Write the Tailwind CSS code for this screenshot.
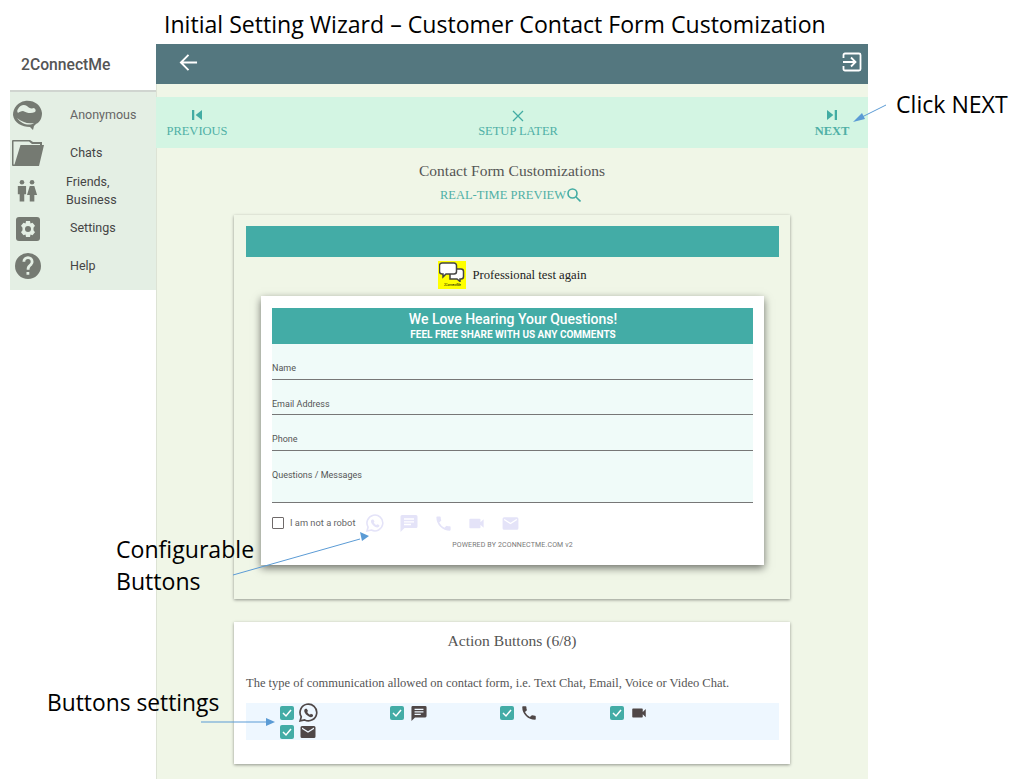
<!DOCTYPE html>
<html>
<head>
<meta charset="utf-8">
<script src="https://cdn.jsdelivr.net/npm/@tailwindcss/browser@4"></script>
</head>
<body class="bg-white">
<div class="relative w-[1015px] h-[779px] overflow-hidden bg-white font-['Liberation_Serif',serif]">
  <div class="h-[44px] pl-[164px] pt-[8px] text-[23.100px] leading-[32px] text-black font-['Open_Sans',sans-serif] whitespace-nowrap">Initial Setting Wizard – Customer Contact Form Customization</div>
  <div class="flex h-[735px]">
    <aside class="w-[156px] shrink-0 font-['Roboto',sans-serif]">
      <div class="h-[46px] pl-[21px] pt-[11px] text-[15.700px] leading-[20px] font-medium text-[#555]">2ConnectMe</div>
      <div class="ml-[10px] h-[200px] pt-[4px] bg-[#e4efe4] border-t-2 border-[#d0d5d0] relative text-[12.500px] text-[#444]">
        <div class="flex items-center h-[39px]">
          <svg class="w-[32px] h-[32px] ml-[2px] shrink-0" viewBox="0 0 32 32"><path fill="#757a72" d="M13 1c9-1 16 4 17 12 0 5-2 9-6 11l-2 2-1 4-3-3C10 27 2 23 1 15 1 8 6 2 13 1z"/><path fill="#e4efe4" d="M6 9c2-4 6-5 9-3 2 2 4 3 7 2 2 1 2 3 1 4-4 2-8 1-12-1-2 0-4 1-5 2-1-1-1-3 0-4zM5 18c5 4 10 6 17 5-4 3-12 2-17-5z"/></svg>
          <span class="ml-[26px] text-[#666]">Anonymous</span>
        </div>
        <div class="flex items-center h-[36px]">
          <svg class="w-[32px] h-[26px] ml-[2px] shrink-0" viewBox="0 0 32 26"><path fill="#757a72" d="M1 0h17l3 2h9v3h2l-5 21H1a1 1 0 0 1-1-1V1a1 1 0 0 1 1-1z"/><path fill="#e4efe4" d="M1.500 1.500h15.500l3 2.500H28v1H8.500L2.500 24.500h-1z"/></svg>
          <span class="ml-[26px]">Chats</span>
        </div>
        <div class="flex items-center h-[39px]">
          <svg class="w-[22px] h-[25px] ml-[6px] shrink-0" viewBox="0 0 24 26"><g fill="#757a72"><circle cx="6.500" cy="4" r="2.500"/><circle cx="17.500" cy="4" r="2.500"/><path d="M2 8h9v9H9v8H4v-8H2z"/><path d="M15 8h5l3 10h-3v7h-5v-7h-3z"/></g></svg>
          <span class="ml-[28px] leading-[18px]">Friends,<br>Business</span>
        </div>
        <div class="flex items-center h-[37px]">
          <svg class="w-[24px] h-[24px] ml-[6px] shrink-0" viewBox="0 0 24 24"><rect width="24" height="24" rx="3" fill="#757a72"/><path fill="#e4efe4" d="M10 4h4l.5 2.500 2-.8 2.500 3-1.500 2v2.600l1.500 2-2.500 3-2-.8L14 20h-4l-.5-2.500-2 .8L5 15.300l1.500-2v-2.600L5 8.700l2.500-3 2 .8z"/><circle cx="12" cy="12" r="3" fill="#757a72"/></svg>
          <span class="ml-[30px]">Settings</span>
        </div>
        <div class="flex items-center h-[38px]">
          <svg class="w-[26px] h-[26px] ml-[5px] shrink-0" viewBox="0 0 24 24"><path fill="#757a72" d="M12 0a12 12 0 1 0 0 24 12 12 0 0 0 0-24zm1.200 20h-2.600v-2.500h2.600zm2.700-8.800-1.100 1.100c-.9.900-1.400 1.600-1.400 3.200h-2.600v-.6c0-1.400.5-2.700 1.400-3.600l1.600-1.600c.5-.5.700-1 .7-1.700a2.500 2.500 0 0 0-5 0H6.900a5.100 5.100 0 0 1 10.200 0c0 1.100-.5 2.100-1.200 2.800z"/></svg>
          <span class="ml-[29px]">Help</span>
        </div>
      </div>
    </aside>
    <main class="w-[712px] shrink-0 bg-[#f0f6e7] border-l border-[#dde3d5]">
      <div class="-ml-px h-[40px] bg-[#54777f] flex items-center justify-between pl-[23px] pr-[6px]">
        <svg class="w-[19px] h-[19px] mb-[4px]" viewBox="0 0 20 20" fill="none" stroke="#fff" stroke-width="2"><path d="M19 10H2M10 2l-8 8 8 8"/></svg>
        <svg class="w-[20px] h-[20px] mb-[4px]" viewBox="0 0 20 20" fill="none" stroke="#fff" stroke-width="1.800"><path d="M1.500 6V3a1.500 1.500 0 0 1 1.500-1.500h14A1.500 1.500 0 0 1 18.500 3v14a1.500 1.500 0 0 1-1.500 1.500H3A1.500 1.500 0 0 1 1.500 17v-3M1 10h12M9 5.500l4.500 4.500L9 14.500"/></svg>
      </div>
      <div class="-ml-px mt-[13px] h-[51px] bg-[#d3f5e3] relative flex justify-between text-[12.500px] leading-[14px] text-[#4fb0a6] pl-[10px] pr-[10px] pt-[13px]">
        <div class="flex flex-col items-center w-[62px]">
          <svg class="w-[10px] h-[10px] mb-[4px]" viewBox="0 0 11 11" fill="#42aca3"><path d="M0 0h2.500v11H0zM11 0v11L4 5.500z"/></svg>
          <span class="whitespace-nowrap">PREVIOUS</span>
        </div>
        <div class="flex flex-col items-center w-[80px] mr-[6px]">
          <svg class="w-[12px] h-[12px] mb-[2px]" viewBox="0 0 12 12" fill="none" stroke="#42aca3" stroke-width="1.300"><path d="M1 1l10 10M11 1L1 11"/></svg>
          <span class="whitespace-nowrap">SETUP LATER</span>
        </div>
        <div class="flex flex-col items-center w-[36px] mr-[8px] font-bold">
          <svg class="w-[10px] h-[10px] mb-[4px]" viewBox="0 0 11 11" fill="#42aca3"><path d="M0 0v11l7-5.500zM8.500 0H11v11H8.500z"/></svg>
          <span>NEXT</span>
        </div>
      </div>
      <div class="text-center text-[15.500px] leading-[18px] text-[#555] mt-[14px] mr-[1px]">Contact Form Customizations</div>
      <div class="flex justify-center items-center text-[12.500px] leading-[16px] text-[#4fb0a6] mt-[7px] mr-[4px]">
        <span>REAL-TIME PREVIEW</span>
        <svg class="w-[14px] h-[14px] ml-[1px]" viewBox="0 0 14 14" fill="none" stroke="#42aca3" stroke-width="1.600"><circle cx="5.500" cy="5.500" r="4.500"/><path d="M9 9l4.500 4.500"/></svg>
      </div>
      <section class="ml-[77px] mt-[12px] w-[556px] h-[384px] bg-[#f0f6e7] shadow-[0_1px_3px_rgba(0,0,0,0.4)] px-[12px] pt-[11px]">
        <div class="h-[31px] bg-[#43aca6] w-[533px]"></div>
        <div class="flex items-center justify-center h-[28px] mt-[4px] ml-[1px]">
          <div class="w-[28px] h-[28px] bg-[#ffff00] relative shrink-0 flex flex-col items-center">
            <svg class="w-[26px] h-[20px] mt-[1px]" viewBox="0 0 26 20" fill="#fff" stroke="#444" stroke-width="1.500"><path d="M11 7h11a2.500 2.500 0 0 1 2.500 2.500v5A2.500 2.500 0 0 1 22 17h-1v2.500L18 17h-7z"/><path d="M3 1h12a2.500 2.500 0 0 1 2.500 2.500v6A2.500 2.500 0 0 1 15 12H7l-3 3v-3H3a2.500 2.500 0 0 1-2.500-2.500v-6A2.500 2.500 0 0 1 3 1z"/></svg>
            <span class="font-['Roboto',sans-serif] text-[3px] leading-[4px] text-black mt-[1px]">2ConnectMe</span>
          </div>
          <span class="ml-[6px] pt-[1px] text-[12.700px] text-[#222]">Professional test again</span>
        </div>
        <div class="ml-[15px] mt-[7px] w-[503px] h-[269px] bg-white shadow-[0_3px_8px_rgba(0,0,0,0.55)] px-[11px] pt-[12px] font-['Roboto',sans-serif]">
          <div class="h-[36px] w-[481px] bg-[#43aca6] text-white text-center pl-[1px]">
            <div class="text-[14px] leading-[18px] pt-[2px] font-medium">We Love Hearing Your Questions!</div>
            <div class="text-[10px] leading-[10px] mt-[2px] font-bold">FEEL FREE SHARE WITH US ANY COMMENTS</div>
          </div>
          <div class="w-[481px] h-[159px] bg-[#f0fbf9] text-[9px] text-[#555]">
            <div class="h-[36px] border-b border-[#777] pt-[18px] leading-[12px]">Name</div>
            <div class="h-[35px] border-b border-[#777] pt-[18px] leading-[12px]">Email Address</div>
            <div class="h-[36px] border-b border-[#777] pt-[18px] leading-[12px]">Phone</div>
            <div class="h-[52px] border-b border-[#777] pt-[18px] leading-[12px]">Questions / Messages</div>
          </div>
          <div class="flex items-center h-[40px] text-[9.300px] text-[#666] relative">
            <span class="w-[12px] h-[12px] border border-[#6f6a6a] rounded-[1px] bg-white shrink-0"></span>
            <span class="ml-[6px] w-[66px] whitespace-nowrap">I am not a robot</span>
            <svg class="w-[19px] h-[19px] ml-[9px]" viewBox="0 0 24 24" fill="none" stroke="#e4e3f8" stroke-width="2"><path d="M2.500 21.500l1.400-5A10 10 0 1 1 8 20.300z"/><path fill="#e4e3f8" stroke="none" d="M9 7c-.5 0-1.500 1-1.500 2.500S9 13 10.500 14.500s3.500 2.500 5 2.500 2.500-1 2.500-1.500v-1.500l-2.500-1.200-1.200 1.200c-1-.4-2.700-2-3.300-3.300l1-1.200L10.500 7z"/></svg>
            <svg class="w-[18px] h-[18px] ml-[16px]" viewBox="0 0 18 18" fill="#e4e3f8"><path d="M2 1h14a1.500 1.500 0 0 1 1.500 1.500v10A1.500 1.500 0 0 1 16 14H4.500L.5 18V2.500A1.500 1.500 0 0 1 2 1z"/><path stroke="#fff" stroke-width="1.300" d="M4 5h10M4 7.800h10M4 10.500h7"/></svg>
            <svg class="w-[19px] h-[19px] ml-[16px]" viewBox="0 0 24 24" fill="#e4e3f8"><path d="M6.600 10.800a15 15 0 0 0 6.600 6.600l2.200-2.200a1 1 0 0 1 1-.2c1.100.4 2.300.6 3.600.6a1 1 0 0 1 1 1V20a1 1 0 0 1-1 1A17 17 0 0 1 3 4a1 1 0 0 1 1-1h3.500a1 1 0 0 1 1 1c0 1.300.2 2.500.6 3.600a1 1 0 0 1-.2 1z"/></svg>
            <svg class="w-[19px] h-[19px] ml-[14px]" viewBox="0 0 24 24" fill="#e4e3f8"><path d="M17 10.500V7a1 1 0 0 0-1-1H4a1 1 0 0 0-1 1v10a1 1 0 0 0 1 1h12a1 1 0 0 0 1-1v-3.500l4 4v-11z"/></svg>
            <svg class="w-[19px] h-[19px] ml-[15px]" viewBox="0 0 24 24" fill="#e4e3f8"><path d="M20 4H4a2 2 0 0 0-2 2v12a2 2 0 0 0 2 2h16a2 2 0 0 0 2-2V6a2 2 0 0 0-2-2zm0 4-8 5-8-5V6l8 5 8-5z"/></svg>
          </div>
          <div class="text-center text-[7px] leading-[10px] text-[#777] mt-[-3px] w-[481px] tracking-[0.15px]">POWERED BY 2CONNECTME.COM v2</div>
        </div>
      </section>
      <section class="ml-[77px] mt-[23px] w-[556px] h-[142px] bg-white shadow-[0_1px_3px_rgba(0,0,0,0.4)] px-[12px] pt-[10px]">
        <div class="text-center text-[15.600px] leading-[18px] text-[#555]">Action Buttons (6/8)</div>
        <div class="text-[12.500px] leading-[14px] text-[#555] mt-[26px] whitespace-nowrap">The type of communication allowed on contact form, i.e. Text Chat, Email, Voice or Video Chat.</div>
        <div class="mt-[13px] h-[37px] w-[533px] bg-[#eef7ff] pl-[34px] grid grid-cols-[110px_110px_110px_110px] auto-rows-[19px] text-[#555]">
          <div class="flex items-center gap-[4px]">
            <span class="w-[14px] h-[14px] rounded-[2px] bg-[#43aca6] flex items-center justify-center"><svg class="w-[10px] h-[10px]" viewBox="0 0 10 10" fill="none" stroke="#fff" stroke-width="1.500"><path d="M1 5l3 3 5-6"/></svg></span>
            <svg class="w-[20px] h-[20px]" viewBox="0 0 24 24" fill="none" stroke="#4f4747" stroke-width="2"><path d="M2.500 21.500l1.400-5A10 10 0 1 1 8 20.300z"/><path fill="#4f4747" stroke="none" d="M9 7c-.5 0-1.500 1-1.500 2.500S9 13 10.500 14.500s3.500 2.500 5 2.500 2.500-1 2.500-1.500v-1.500l-2.500-1.200-1.200 1.200c-1-.4-2.700-2-3.300-3.300l1-1.200L10.500 7z"/></svg>
          </div>
          <div class="flex items-center gap-[7px]">
            <span class="w-[14px] h-[14px] rounded-[2px] bg-[#43aca6] flex items-center justify-center"><svg class="w-[10px] h-[10px]" viewBox="0 0 10 10" fill="none" stroke="#fff" stroke-width="1.500"><path d="M1 5l3 3 5-6"/></svg></span>
            <svg class="w-[16px] h-[16px]" viewBox="0 0 18 18" fill="#4f4747"><path d="M2 1h14a1.500 1.500 0 0 1 1.500 1.500v10A1.500 1.500 0 0 1 16 14H4.500L.5 18V2.500A1.500 1.500 0 0 1 2 1z"/><path stroke="#eef7ff" stroke-width="1.300" d="M4 5h10M4 7.800h10M4 10.500h7"/></svg>
          </div>
          <div class="flex items-center gap-[6px]">
            <span class="w-[14px] h-[14px] rounded-[2px] bg-[#43aca6] flex items-center justify-center"><svg class="w-[10px] h-[10px]" viewBox="0 0 10 10" fill="none" stroke="#fff" stroke-width="1.500"><path d="M1 5l3 3 5-6"/></svg></span>
            <svg class="w-[18px] h-[18px]" viewBox="0 0 24 24" fill="#4f4747"><path d="M6.600 10.800a15 15 0 0 0 6.600 6.600l2.200-2.200a1 1 0 0 1 1-.2c1.100.4 2.300.6 3.600.6a1 1 0 0 1 1 1V20a1 1 0 0 1-1 1A17 17 0 0 1 3 4a1 1 0 0 1 1-1h3.500a1 1 0 0 1 1 1c0 1.300.2 2.500.6 3.600a1 1 0 0 1-.2 1z"/></svg>
          </div>
          <div class="flex items-center gap-[6px]">
            <span class="w-[14px] h-[14px] rounded-[2px] bg-[#43aca6] flex items-center justify-center"><svg class="w-[10px] h-[10px]" viewBox="0 0 10 10" fill="none" stroke="#fff" stroke-width="1.500"><path d="M1 5l3 3 5-6"/></svg></span>
            <svg class="w-[18px] h-[18px]" viewBox="0 0 24 24" fill="#4f4747"><path d="M17 10.500V7a1 1 0 0 0-1-1H4a1 1 0 0 0-1 1v10a1 1 0 0 0 1 1h12a1 1 0 0 0 1-1v-3.500l4 4v-11z"/></svg>
          </div>
          <div class="flex items-center gap-[5px]">
            <span class="w-[14px] h-[14px] rounded-[2px] bg-[#43aca6] flex items-center justify-center"><svg class="w-[10px] h-[10px]" viewBox="0 0 10 10" fill="none" stroke="#fff" stroke-width="1.500"><path d="M1 5l3 3 5-6"/></svg></span>
            <svg class="w-[18px] h-[18px]" viewBox="0 0 24 24" fill="#4f4747"><path d="M20 4H4a2 2 0 0 0-2 2v12a2 2 0 0 0 2 2h16a2 2 0 0 0 2-2V6a2 2 0 0 0-2-2zm0 4-8 5-8-5V6l8 5 8-5z"/></svg>
          </div>
        </div>
      </section>
    </main>
  </div>
  <div class="absolute left-[896px] top-[89px] text-[23.100px] leading-[30px] text-black font-['Open_Sans',sans-serif]">Click NEXT</div>
  <div class="absolute left-[116px] top-[533px] text-[23.100px] leading-[32px] text-black font-['Open_Sans',sans-serif]">Configurable<br>Buttons</div>
  <div class="absolute left-[47px] top-[688px] text-[22.800px] leading-[30px] text-black font-['Open_Sans',sans-serif]">Buttons settings</div>
  <svg class="absolute left-0 top-0 w-[1015px] h-[779px] pointer-events-none" viewBox="0 0 1015 779" fill="#5b9bd5" stroke="none">
    <path d="M886 105L858 119" stroke="#5b9bd5" stroke-width="1"/><path d="M853 122l9-9 3 6z"/>
    <path d="M233 575L360 539" stroke="#5b9bd5" stroke-width="1"/><path d="M369 536l-9-4 2 9z"/>
    <path d="M201 722H268" stroke="#5b9bd5" stroke-width="1"/><path d="M275 722l-9-4v8z"/>
  </svg>
</div>
</body>
</html>
